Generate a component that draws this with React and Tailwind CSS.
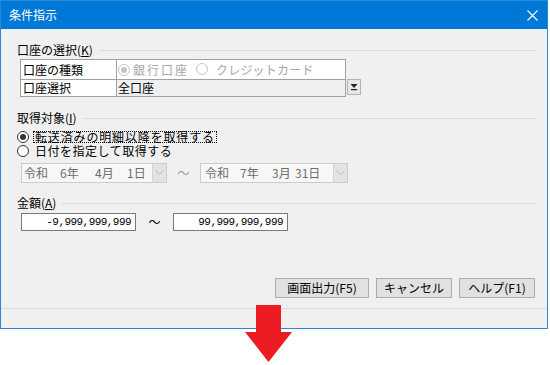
import React from "react";

const Radio = ({ checked, disabled }) => (
  <span
    className={`relative inline-flex w-[12px] h-[12px] shrink-0 rounded-full border items-center justify-center bg-white ${
      disabled ? "border-[#c4c4c4]" : "border-[#333333]"
    }`}
  >
    {checked && (
      <span className={`w-[6px] h-[6px] rounded-full ${disabled ? "bg-[#c4c4c4]" : "bg-[#333333]"}`} />
    )}
  </span>
);

const GroupHeader = ({ children, className = "" }) => (
  <div className={`flex items-center h-[16px] ${className}`}>
    <span className="whitespace-nowrap">{children}</span>
    <div className="flex-1 h-px bg-[#dcdcdc] ml-[6px]" />
  </div>
);

const Chevron = () => (
  <svg width="9" height="6" viewBox="0 0 9 6">
    <path d="M0.5 0.5 L4.5 4.5 L8.5 0.5" fill="none" stroke="#b8b8b8" strokeWidth="1" />
  </svg>
);

export default function App() {
  return (
    <div className="w-[550px] h-[365px] bg-white relative overflow-hidden font-['Noto_Sans_CJK_JP',sans-serif] text-[12px] leading-[16px] text-black">
      <div className="w-[548px] h-[329px] border border-[#2b88d8] bg-[#f0f0f0] flex flex-col">
        {/* title bar */}
        <div className="h-[28px] bg-[#0078d7] flex items-center pl-[8px] pr-[9px] text-white shrink-0">
          <span className="text-[12px]">条件指示</span>
          <div className="flex-1" />
          <svg width="11" height="11" viewBox="0 0 11 11">
            <path d="M0.5 0.5 L10.5 10.5 M10.5 0.5 L0.5 10.5" stroke="white" strokeWidth="1.1" />
          </svg>
        </div>

        {/* body */}
        <div className="flex-1 flex flex-col pl-[16px] pr-[10px]">
          <GroupHeader className="mt-[13px]">
            口座の選択(<span className="underline">K</span>)
          </GroupHeader>

          <div className="flex mt-[1px] ml-[3px]">
            <div className="w-[326px] border border-[#a0a0a0] bg-white">
              <div className="flex h-[20px] border-b border-[#a0a0a0]">
                <div className="w-[96px] border-r border-[#a0a0a0] pl-[2px] flex items-center">口座の種類</div>
                <div className="flex-1 flex items-center pl-[1px] text-[#a6a6a6]">
                  <Radio checked disabled />
                  <span className="ml-[3px] tracking-[2px]">銀行口座</span>
                  <span className="ml-[7px]">
                    <Radio disabled />
                  </span>
                  <span className="ml-[8px] tracking-[0.2px]">クレジットカード</span>
                </div>
              </div>
              <div className="flex h-[16px]">
                <div className="w-[96px] border-r border-[#a0a0a0] pl-[2px] flex items-center">口座選択</div>
                <div className="flex-1 flex items-center pl-[1px] bg-[#f0f0f0]">全口座</div>
              </div>
            </div>
            <div className="ml-[1px] mt-[20px] w-[14px] h-[16px] border border-[#b4b4b4] bg-[#e6e6e6] flex items-center justify-center">
              <svg width="8" height="8" viewBox="0 0 8 8">
                <path d="M0.5 1 L7.5 1 L4 5 Z" fill="#222" />
                <rect x="1" y="6" width="6" height="1.2" fill="#222" />
              </svg>
            </div>
          </div>

          <GroupHeader className="mt-[13px]">
            取得対象(<span className="underline">I</span>)
          </GroupHeader>

          <div className="mt-[4px] h-[14px] flex items-center leading-[12px]">
            <Radio checked />
            <span className="ml-[4px] border border-dotted border-black h-[12px] flex items-center px-[1px] tracking-[0.85px] whitespace-nowrap leading-[10px]">
              転送済みの明細以降を取得する
            </span>
          </div>
          <div className="h-[14px] flex items-center leading-[12px]">
            <Radio />
            <span className="ml-[6px] tracking-[0.5px] whitespace-nowrap">日付を指定して取得する</span>
          </div>

          <div className="mt-[5px] flex items-center h-[20px] ml-[4px] text-[#6d6d6d]">
            <div className="w-[146px] h-[20px] border border-[#cccccc] bg-[#f7f7f7] flex">
              <div className="flex-1 flex items-center pl-[2px] whitespace-nowrap">
                <span className="w-[36px]">令和</span>
                <span className="w-[35px]">6年</span>
                <span className="w-[32px]">4月</span>
                <span>1日</span>
              </div>
              <div className="w-[14px] bg-[#e3e3e3] border-l border-[#d4d4d4] flex items-center justify-center">
                <Chevron />
              </div>
            </div>
            <span className="w-[33px] text-center text-[#9a9a9a]">～</span>
            <div className="w-[148px] h-[20px] border border-[#cccccc] bg-[#f7f7f7] flex">
              <div className="flex-1 flex items-center pl-[4px] whitespace-nowrap">
                <span className="w-[35px]">令和</span>
                <span className="w-[32px]">7年</span>
                <span className="w-[23px]">3月</span>
                <span>31日</span>
              </div>
              <div className="w-[14px] bg-[#e3e3e3] border-l border-[#d4d4d4] flex items-center justify-center">
                <Chevron />
              </div>
            </div>
          </div>

          <GroupHeader className="mt-[12px]">
            金額(<span className="underline">A</span>)
          </GroupHeader>

          <div className="mt-[2px] flex items-center ml-[4px]">
            <div className="w-[115px] h-[18px] border border-[#7a7a7a] bg-white flex items-center justify-end pr-[4px] font-['Liberation_Mono',monospace] text-[11px] tracking-[-0.55px]">
              -9,999,999,999
            </div>
            <span className="w-[37px] text-center">～</span>
            <div className="w-[115px] h-[18px] border border-[#7a7a7a] bg-white flex items-center justify-end pr-[4px] font-['Liberation_Mono',monospace] text-[11px] tracking-[-0.55px]">
              99,999,999,999
            </div>
          </div>

          <div className="flex-1" />

          <div className="flex justify-end gap-[7px] mr-[2px] mb-[10px]">
            <button className="w-[94px] h-[20px] bg-[#e1e1e1] border border-[#adadad] text-[12px] leading-[16px] flex items-center justify-center">
              画面出力(F5)
            </button>
            <button className="w-[76px] h-[20px] bg-[#e1e1e1] border border-[#adadad] text-[12px] leading-[16px] flex items-center justify-center">
              キャンセル
            </button>
            <button className="w-[76px] h-[20px] bg-[#e1e1e1] border border-[#adadad] text-[12px] leading-[16px] flex items-center justify-center">
              ヘルプ(F1)
            </button>
          </div>
        </div>

        <div className="h-px bg-[#dadada] shrink-0" />
        <div className="h-[19px] shrink-0" />
      </div>

      {/* red arrow */}
      <svg className="absolute left-[244px] top-[304px]" width="50" height="61" viewBox="0 0 50 61">
        <polygon points="12,1 37,1 37,28 48,28 24.5,58 1,28 12,28" fill="#ed1c24" />
      </svg>
    </div>
  );
}
